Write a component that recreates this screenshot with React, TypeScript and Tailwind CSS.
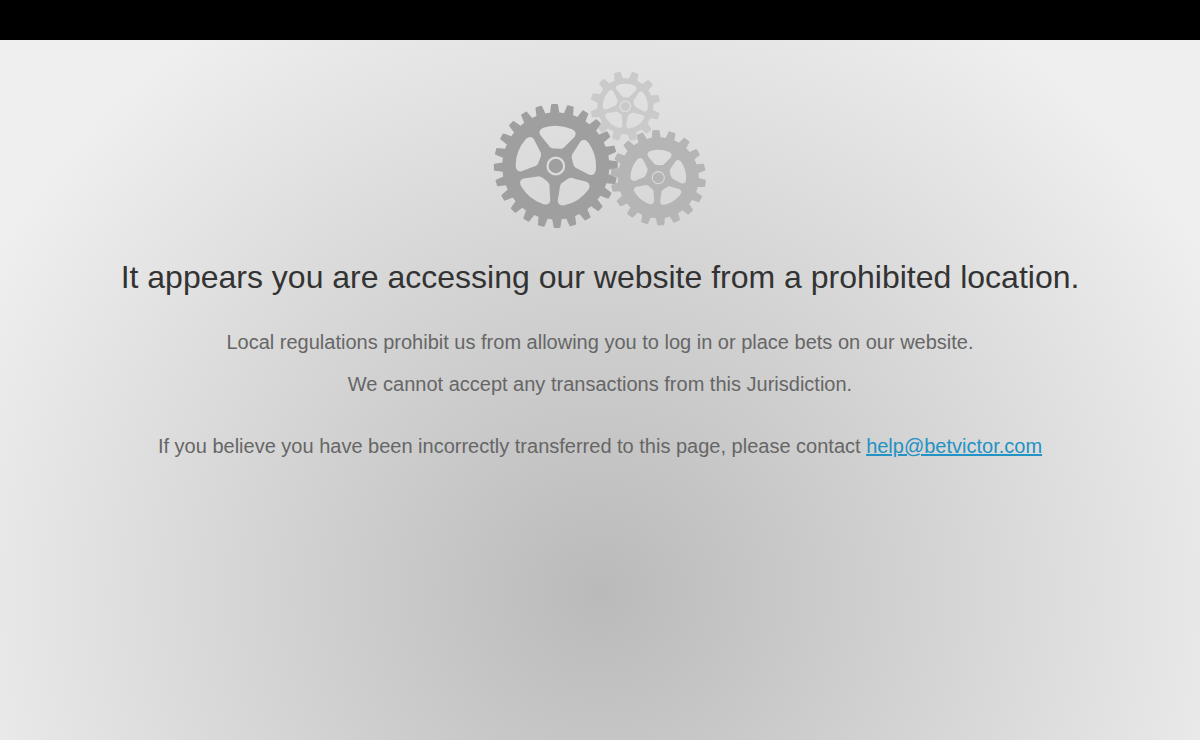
import React from 'react';

interface GearProps {
  cx: number;
  cy: number;
  teeth: number;
  // offset of the first tooth, in degrees clockwise from the top
  offset: number;
  outer: number;
  root: number;
  tip: number;
  base: number;
  // spoke windows
  windowTop: number;
  windowBottom: number;
  windowTopHalf: number;
  windowBottomHalf: number;
  corner: number;
  hubRing: number;
  hubWidth: number;
  fill: string;
}

const point = (r: number, deg: number) => {
  const a = (deg * Math.PI) / 180;
  return `${(r * Math.sin(a)).toFixed(2)} ${(-r * Math.cos(a)).toFixed(2)}`;
};

const rotate = (x: number, y: number, deg: number) => {
  const a = (deg * Math.PI) / 180;
  const rx = x * Math.cos(a) - y * Math.sin(a);
  const ry = x * Math.sin(a) + y * Math.cos(a);
  return `${rx.toFixed(2)} ${ry.toFixed(2)}`;
};

const rimPath = ({ teeth, offset, outer, root, tip, base }: GearProps) => {
  const step = 360 / teeth;
  let d = '';
  for (let i = 0; i < teeth; i++) {
    const a = offset + i * step;
    d += `${i === 0 ? 'M' : 'L'}${point(root, a - base)}`;
    d += `L${point(outer - 0.8, a - tip)}Q${point(outer, a - tip)} ${point(outer, a - tip * 0.7)}`;
    d += `L${point(outer, a + tip * 0.7)}Q${point(outer, a + tip)} ${point(outer - 0.8, a + tip)}`;
    d += `L${point(root, a + base)}`;
    d += `A${root} ${root} 0 0 1 ${point(root, a + step - base)}`;
  }
  return `${d}Z`;
};

const windowPath = (gear: GearProps, deg: number) => {
  const { windowTop: t, windowBottom: b, windowTopHalf: th, windowBottomHalf: bh, corner: c } = gear;
  const p = (x: number, y: number) => rotate(x, y, deg);
  const len = Math.hypot(th - bh, t - b);
  const ux = (th - bh) / len;
  const uy = (t - b) / len;
  const shoulder = Math.sqrt(t * t - th * th);
  // where the outer arc starts to turn into the sides
  const ax = th - c;
  const ay = Math.sqrt(t * t - ax * ax);
  const k = c * 0.7;
  return [
    `M${p(-ax, -ay)}`,
    `A${t} ${t} 0 0 1 ${p(ax, -ay)}`,
    `Q${p(th, -shoulder)} ${p(th - ux * c, -shoulder + uy * c)}`,
    `L${p(bh + ux * k, -b - uy * k)}`,
    `Q${p(bh, -b)} ${p(bh - k, -b)}`,
    `L${p(-bh + k, -b)}`,
    `Q${p(-bh, -b)} ${p(-bh - ux * k, -b - uy * k)}`,
    `L${p(-th + ux * c, -shoulder + uy * c)}`,
    `Q${p(-th, -shoulder)} ${p(-ax, -ay)}`,
    'Z',
  ].join('');
};

const ringPath = (r: number) => `M${-r} 0A${r} ${r} 0 1 0 ${r} 0A${r} ${r} 0 1 0 ${-r} 0Z`;

const Gear = (props: GearProps) => {
  const windows = [3, 75, 147, 219, 291].map((deg) => windowPath(props, deg)).join('');
  return (
    <g transform={`translate(${props.cx} ${props.cy})`} fill={props.fill}>
      <path fillRule="evenodd" d={rimPath(props) + windows + ringPath(props.hubRing)} />
      <path d={ringPath(props.hubRing - props.hubWidth)} />
    </g>
  );
};

const gears: GearProps[] = [
  {
    cx: 132.3, cy: 34.3, teeth: 12, offset: -13.5, outer: 35, root: 28, tip: 5.8, base: 9,
    windowTop: 22.5, windowBottom: 9, windowTopHalf: 11.4, windowBottomHalf: 3.4, corner: 3.2,
    hubRing: 5.8, hubWidth: 1.2, fill: '#cacaca',
  },
  {
    cx: 165.3, cy: 105.7, teeth: 18, offset: -3, outer: 47.7, root: 40.5, tip: 4.4, base: 6.4,
    windowTop: 27.8, windowBottom: 12.6, windowTopHalf: 13.4, windowBottomHalf: 4.8, corner: 4,
    hubRing: 6.6, hubWidth: 1.1, fill: '#b5b5b5',
  },
  {
    cx: 62.8, cy: 94, teeth: 24, offset: -1.2, outer: 62, root: 53.5, tip: 3.2, base: 5,
    windowTop: 40.2, windowBottom: 17.4, windowTopHalf: 20, windowBottomHalf: 6.8, corner: 5.6,
    hubRing: 9.4, hubWidth: 2.2, fill: '#9f9f9f',
  },
];

const App = () => {
  return (
    <div className="min-h-screen bg-[radial-gradient(at_50%_80%,#bababa,#efefef_82%)] font-['Liberation_Sans',Arial,sans-serif]">
      <header className="h-10 bg-black" />

      <main className="flex flex-col items-center px-4 pt-8 text-center">
        {/* Gears */}
        <svg width="214" height="157" viewBox="0 0 214 157" aria-hidden="true">
          {gears.map((gear) => (
            <Gear key={gear.fill} {...gear} />
          ))}
        </svg>

        <h1 className="mt-7 text-[32px] leading-10 text-[#333]">
          It appears you are accessing our website from a prohibited location.
        </h1>

        <div className="mt-6 text-[20px] leading-[42px] text-[#666]">
          <p>Local regulations prohibit us from allowing you to log in or place bets on our website.</p>
          <p>We cannot accept any transactions from this Jurisdiction.</p>
          <p className="mt-5">
            If you believe you have been incorrectly transferred to this page, please contact{' '}
            <a href="mailto:help@betvictor.com" className="text-[#2392c4] underline">
              help@betvictor.com
            </a>
          </p>
        </div>
      </main>
    </div>
  );
};

export default App;
